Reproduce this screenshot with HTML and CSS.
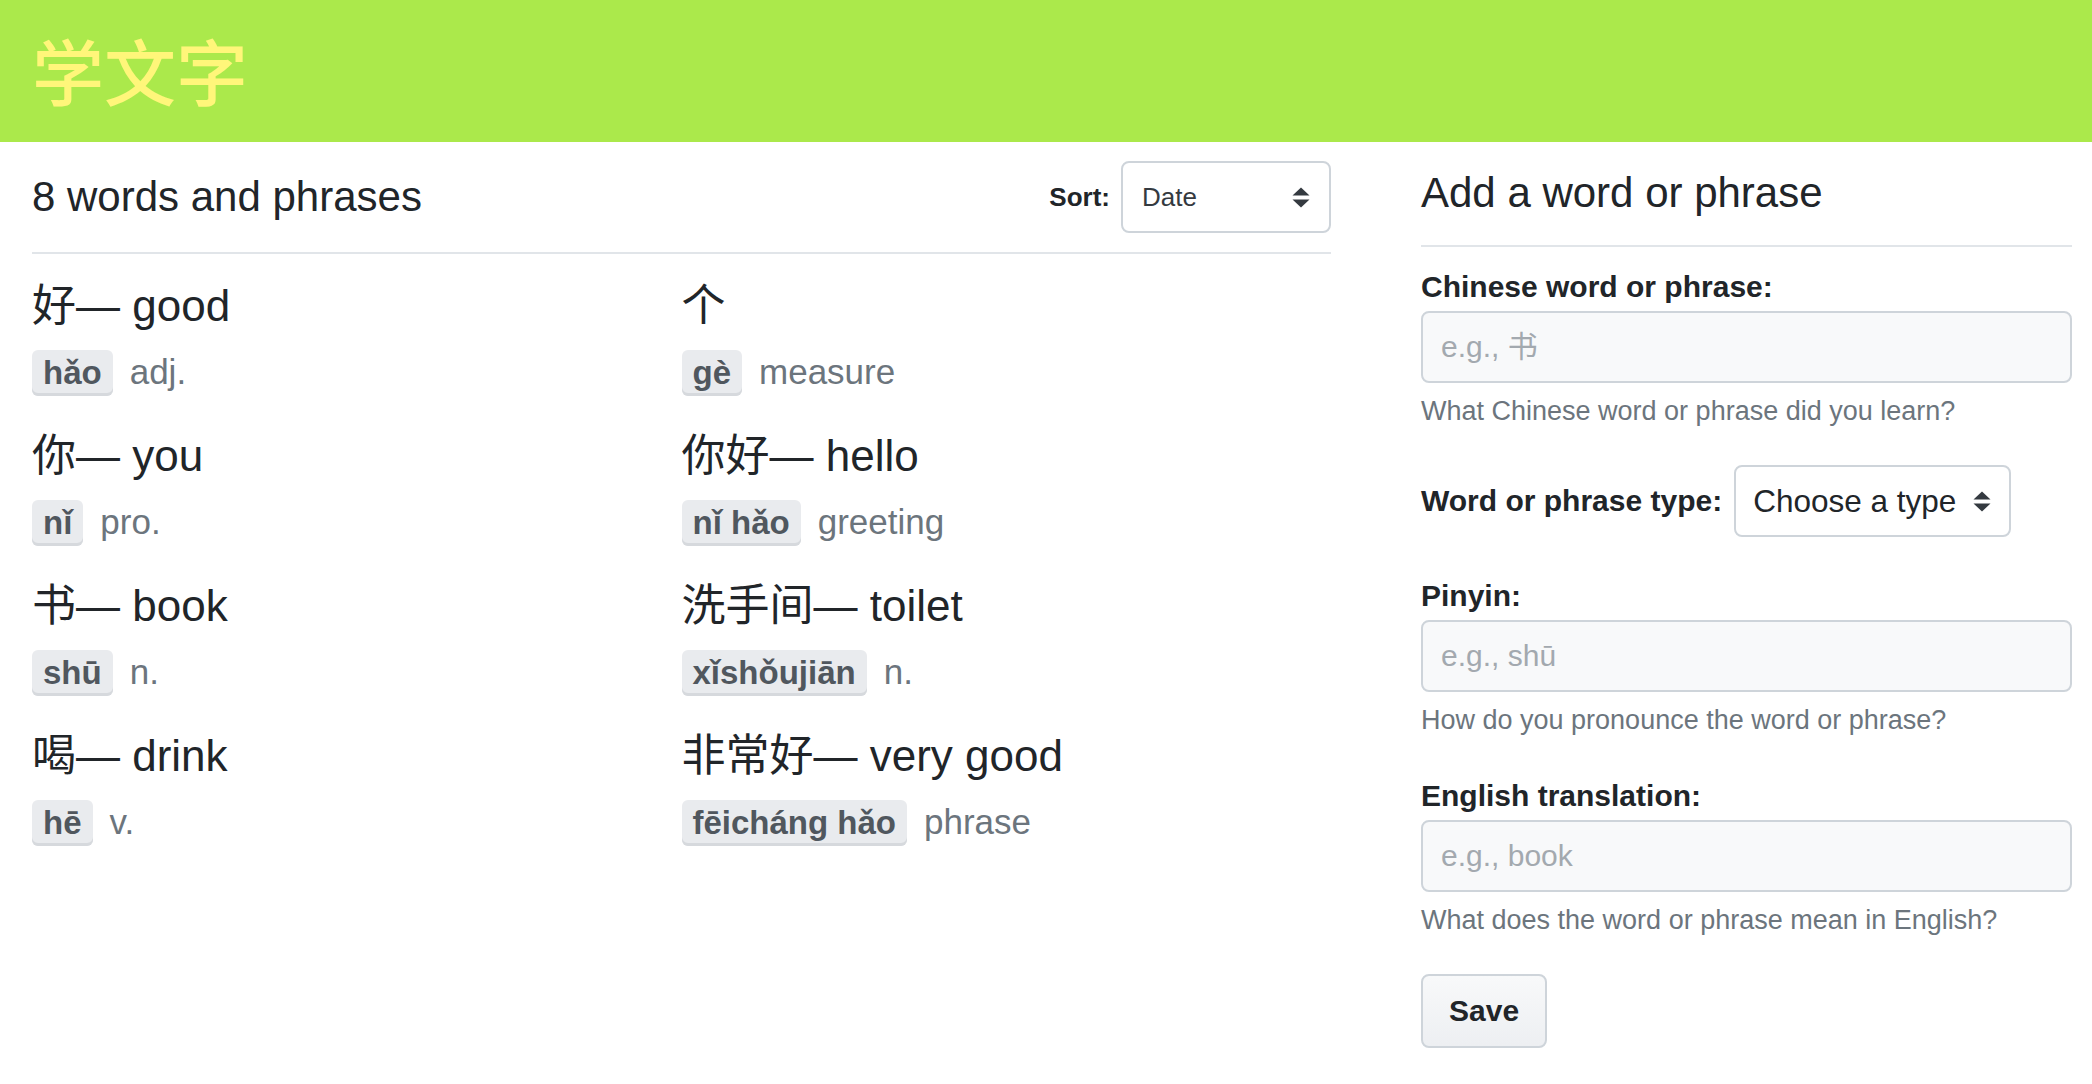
FILE: index.html
```html
<!DOCTYPE html>
<html lang="en">
<head>
<meta charset="utf-8">
<title>学文字</title>
<link rel="stylesheet" href="styles.css">
</head>
<body>
<header class="topbar">
  <h1 class="brand">学文字</h1>
</header>
<main class="layout">
  <section class="words">
    <div class="words-head">
      <h2 class="count">8 words and phrases</h2>
      <div class="sort">
        <span class="sort-label">Sort:</span>
        <div class="select select-sort">
          <span>Date</span>
          <svg viewBox="0 0 18 21" aria-hidden="true"><path d="M9 0.5 L17.5 8.5 L0.5 8.5 Z M0.5 12.5 L17.5 12.5 L9 20.5 Z" fill="#343a40"/></svg>
        </div>
      </div>
    </div>
    <hr class="rule">
    <ul class="word-grid">
      <li class="word"><div class="word-title">好— good</div><div class="word-meta"><span class="py">hǎo</span><span class="pos">adj.</span></div></li>
      <li class="word"><div class="word-title">个</div><div class="word-meta"><span class="py">gè</span><span class="pos">measure</span></div></li>
      <li class="word"><div class="word-title">你— you</div><div class="word-meta"><span class="py">nǐ</span><span class="pos">pro.</span></div></li>
      <li class="word"><div class="word-title">你好— hello</div><div class="word-meta"><span class="py">nǐ hǎo</span><span class="pos">greeting</span></div></li>
      <li class="word"><div class="word-title">书— book</div><div class="word-meta"><span class="py">shū</span><span class="pos">n.</span></div></li>
      <li class="word"><div class="word-title">洗手间— toilet</div><div class="word-meta"><span class="py">xǐshǒujiān</span><span class="pos">n.</span></div></li>
      <li class="word"><div class="word-title">喝— drink</div><div class="word-meta"><span class="py">hē</span><span class="pos">v.</span></div></li>
      <li class="word"><div class="word-title">非常好— very good</div><div class="word-meta"><span class="py">fēicháng hǎo</span><span class="pos">phrase</span></div></li>
    </ul>
  </section>
  <aside class="add">
    <h2 class="add-title">Add a word or phrase</h2>
    <hr class="rule rule-add">
    <form class="form">
      <div class="group">
        <label class="label" for="zh">Chinese word or phrase:</label>
        <input class="input" id="zh" type="text" placeholder="e.g., 书">
        <p class="help">What Chinese word or phrase did you learn?</p>
      </div>
      <div class="type-row">
        <label class="label">Word or phrase type:</label>
        <div class="select select-type">
          <span>Choose a type</span>
          <svg viewBox="0 0 18 21" aria-hidden="true"><path d="M9 0.5 L17.5 8.5 L0.5 8.5 Z M0.5 12.5 L17.5 12.5 L9 20.5 Z" fill="#343a40"/></svg>
        </div>
      </div>
      <div class="group group-wide">
        <label class="label" for="py">Pinyin:</label>
        <input class="input" id="py" type="text" placeholder="e.g., shū">
        <p class="help">How do you pronounce the word or phrase?</p>
      </div>
      <div class="group">
        <label class="label" for="en">English translation:</label>
        <input class="input" id="en" type="text" placeholder="e.g., book">
        <p class="help">What does the word or phrase mean in English?</p>
      </div>
      <button class="save" type="button">Save</button>
    </form>
  </aside>
</main>
</body>
</html>
```

FILE: styles.css
```css
html, body {
  margin: 0;
  padding: 0;
  background: #ffffff;
}

body {
  font-family: "Liberation Sans", "Noto Sans CJK SC", sans-serif;
  color: #212529;
}

.topbar {
  height: 142px;
  box-sizing: border-box;
  background: #abe94b;
  display: flex;
  align-items: center;
  padding-left: 32px;
}

.brand {
  margin: 0;
  font-family: "Noto Sans CJK SC", sans-serif;
  font-size: 72px;
  font-weight: 500;
  line-height: 1;
  color: #fff67a;
  position: relative;
  top: -2px;
}

.layout {
  display: grid;
  grid-template-columns: 1299px 651px;
  column-gap: 90px;
  padding: 0 20px 0 32px;
}

/* left column */
.words-head {
  display: flex;
  align-items: center;
  justify-content: space-between;
  height: 72px;
  margin-top: 19px;
}

.count {
  margin: 0;
  font-size: 42px;
  font-weight: 400;
  line-height: 50px;
}

.sort {
  display: flex;
  align-items: center;
  gap: 11px;
}

.sort-label {
  font-size: 26px;
  font-weight: 700;
}

.select {
  display: flex;
  align-items: center;
  justify-content: space-between;
  box-sizing: border-box;
  height: 72px;
  border: 2px solid #ced4da;
  border-radius: 8px;
  background: #ffffff;
}

.select svg {
  width: 18px;
  height: 21px;
  flex: none;
}

.select-sort {
  width: 210px;
  padding: 0 19px 0 19px;
  font-size: 26px;
  color: #343a40;
}

.rule {
  border: 0;
  border-top: 2px solid #e1e5e9;
  margin: 19px 0 0;
  height: 0;
}

.word-grid {
  list-style: none;
  margin: 27px 0 0;
  padding: 0;
  display: grid;
  grid-template-columns: 1fr 1fr;
}

.word {
  margin-bottom: 36px;
}

.word-title {
  font-size: 44px;
  line-height: 50px;
  margin-bottom: 18px;
  white-space: nowrap;
}

.word-meta {
  height: 46px;
  font-size: 35px;
  line-height: 46px;
  white-space: nowrap;
}

.py {
  display: inline-block;
  height: 46px;
  padding: 0 11px;
  margin-right: 17px;
  font-size: 33px;
  font-weight: 700;
  line-height: 46px;
  color: #50575e;
  background: #e9ebee;
  border-radius: 6px;
  box-shadow: inset 0 -3px 0 #d6d9dd;
}

.pos {
  font-size: 35px;
  color: #6c757d;
}

/* right column */
.add-title {
  margin: 26px 0 0;
  font-size: 42px;
  font-weight: 400;
  line-height: 50px;
}

.rule-add {
  margin-top: 27px;
}

.form {
  margin-top: 22px;
}

.group {
  display: flex;
  flex-direction: column;
  margin-bottom: 36px;
}

.group-wide {
  margin-bottom: 40px;
}

.label {
  font-size: 30px;
  font-weight: 700;
  line-height: 36px;
  color: #212529;
}

.input {
  margin-top: 6px;
  width: 100%;
  height: 72px;
  box-sizing: border-box;
  border: 2px solid #ced4da;
  border-radius: 8px;
  background: #f8f9fa;
  padding: 0 18px;
  font-family: "Liberation Sans", "Noto Sans CJK SC", sans-serif;
  font-size: 30px;
  color: #495057;
  outline: none;
}

.input::placeholder {
  color: #a3a9af;
}

.help {
  margin: 10px 0 0;
  font-size: 27px;
  line-height: 36px;
  color: #6c757d;
}

.type-row {
  display: flex;
  align-items: center;
  gap: 12px;
  margin-bottom: 41px;
}

.select-type {
  width: 277px;
  padding: 0 18px 0 17px;
  font-size: 31.5px;
  color: #212529;
}

.save {
  display: block;
  height: 74px;
  padding: 0 26px;
  border: 2px solid #ced4da;
  border-radius: 8px;
  background: linear-gradient(#f8f9fa, #edeff2);
  font-family: "Liberation Sans", sans-serif;
  font-size: 30px;
  font-weight: 700;
  color: #212529;
}
```
